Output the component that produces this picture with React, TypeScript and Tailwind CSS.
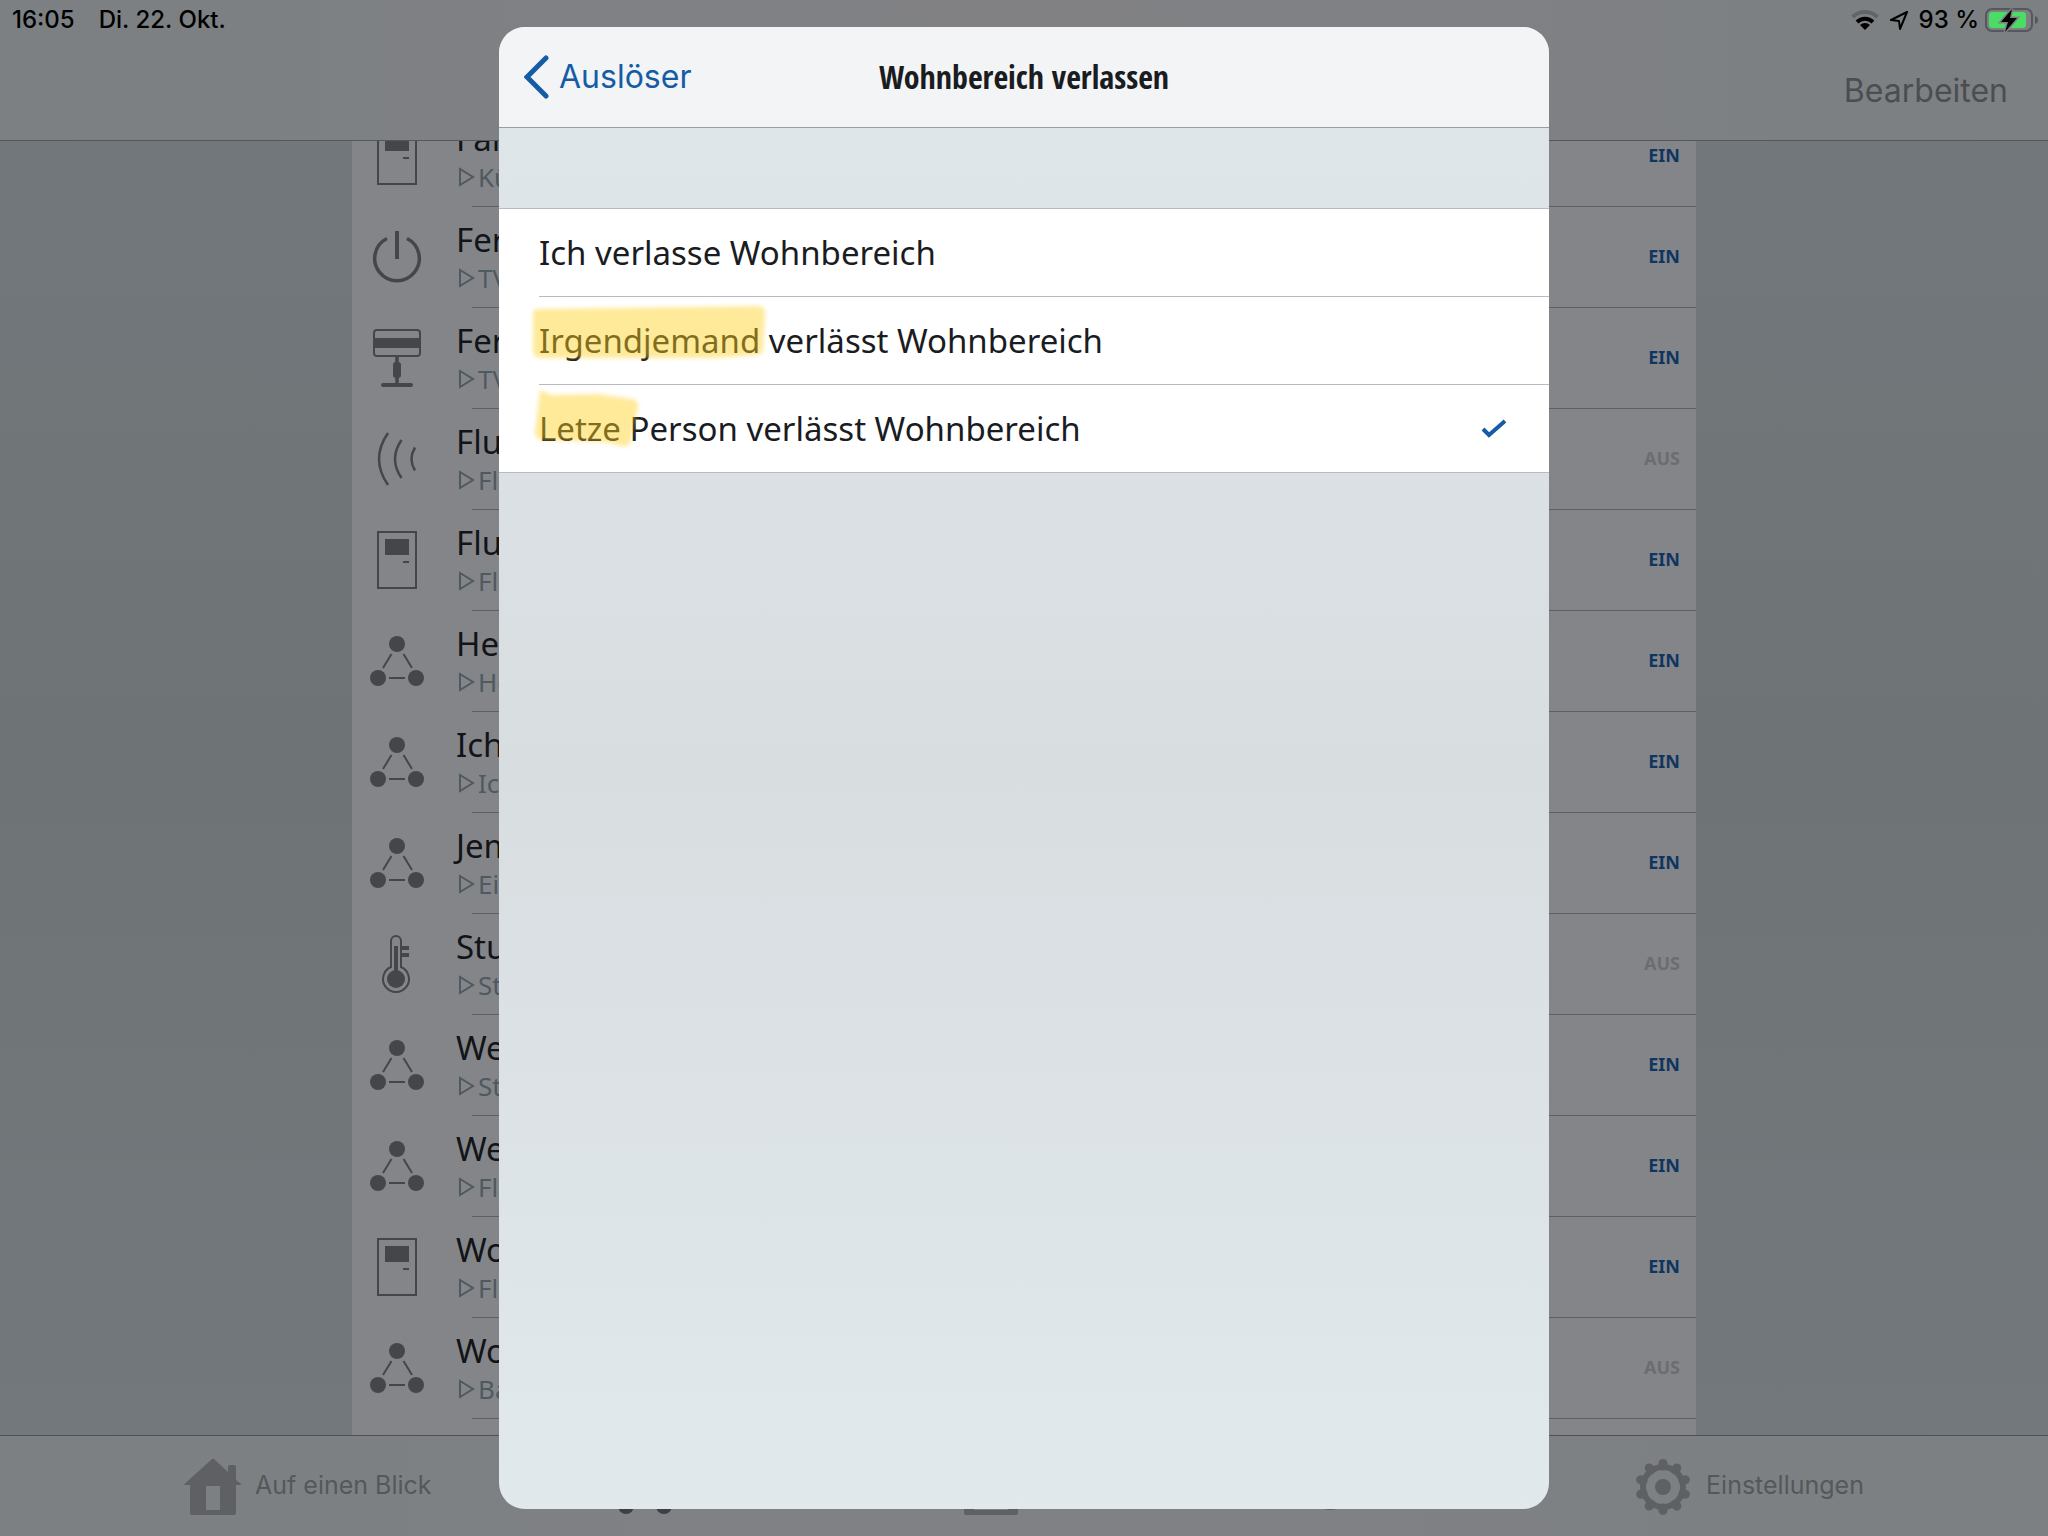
import type { ReactNode } from "react";

type IconName = "door" | "power" | "blind" | "motion" | "scene" | "thermometer";

const automations: { icon: IconName; title: string; trigger: string; on: boolean }[] = [
  { icon: "door", title: "Farbe", trigger: "Küche", on: true },
  { icon: "power", title: "Fernseher", trigger: "TV", on: true },
  { icon: "blind", title: "Fernseher", trigger: "TV", on: true },
  { icon: "motion", title: "Flur", trigger: "Flur", on: false },
  { icon: "door", title: "Flur", trigger: "Flur", on: true },
  { icon: "scene", title: "Heim", trigger: "Heim", on: true },
  { icon: "scene", title: "Ich", trigger: "Ich", on: true },
  { icon: "scene", title: "Jemand", trigger: "Ein", on: true },
  { icon: "thermometer", title: "Stufe", trigger: "Stufe", on: false },
  { icon: "scene", title: "Wenn", trigger: "Stufe", on: true },
  { icon: "scene", title: "Wenn", trigger: "Flur", on: true },
  { icon: "door", title: "Wohnen", trigger: "Flur", on: true },
  { icon: "scene", title: "Wohnen", trigger: "Bad", on: false },
];

const icons: Record<IconName, ReactNode> = {
  door: (
    <>
      <rect x="11" y="2" width="38" height="56" strokeWidth="2" />
      <path d="M18 9h24v16H18zM36 31h6v2h-6z" fill="currentColor" stroke="none" />
    </>
  ),
  power: (
    <>
      <path d="M20 11.5a22.3 22.3 0 1 0 20 0" strokeWidth="3.5" />
      <path d="M30 4v28" strokeWidth="4" />
    </>
  ),
  blind: (
    <>
      <rect x="7" y="2" width="46" height="26" rx="3" strokeWidth="2" />
      <path d="M7 10h46v10H7z" fill="currentColor" stroke="none" />
      <path d="M30 28v28" strokeWidth="3.5" />
      <rect x="26" y="34" width="8" height="16" rx="3" fill="currentColor" stroke="none" />
      <path d="M16 57h28" strokeWidth="4" strokeLinecap="round" />
    </>
  ),
  motion: (
    <g strokeWidth="2.5">
      <path d="M21 4q-18 26 0 52" />
      <path d="M34.500 11q-13 19 0 38" />
      <path d="M48 18.500q-7 11.500 0 23" />
    </g>
  ),
  scene: (
    <>
      <g fill="currentColor" stroke="none">
        <circle cx="30" cy="13" r="8" />
        <circle cx="11" cy="47" r="8" />
        <circle cx="49" cy="47" r="8" />
      </g>
      <path d="M24.500 23l-8.500 14M36.500 23l8.500 14M22 47h16" strokeWidth="2" />
    </>
  ),
  thermometer: (
    <>
      <path d="M24 33V7a5 5 0 0 1 10 0v26A13 13 0 1 1 24 33z" strokeWidth="2" />
      <path d="M27 12h4v28h-4zM35 12h7v4h-7zM35 19h7v4h-7z" fill="currentColor" stroke="none" />
      <circle cx="29" cy="45" r="9" fill="currentColor" stroke="none" />
    </>
  ),
};

const tabs: { label: string; active?: boolean; icon: ReactNode }[] = [
  {
    label: "Auf einen Blick",
    icon: (
      <path
        fillRule="evenodd"
        d="M27.500 2.500q1.500-1.500 3 0L44 15V10q0-2 2-2h4q2 0 2 2v13l5 4q1 1-1 1h-4v28q0 2-2 2H8q-2 0-2-2V28H1.500q-2 0-.5-1.500zM22 29v24h14V29z"
      />
    ),
  },
  {
    label: "Szenen",
    active: true,
    icon: (
      <>
        <circle cx="27" cy="15" r="8" />
        <circle cx="8" cy="49" r="8" />
        <circle cx="46" cy="49" r="8" />
        <path d="M21 25l-8 14M33 25l8 14M19 49h16" stroke="currentColor" strokeWidth="2" />
      </>
    ),
  },
  {
    label: "Räume",
    icon: <path fillRule="evenodd" d="M2 4h50q2 0 2 2v50q0 2-2 2H2q-2 0-2-2V6q0-2 2-2zM10 12v41h34V12z" />,
  },
  {
    label: "Status",
    icon: (
      <>
        <circle cx="27" cy="29" r="23" fill="none" stroke="currentColor" strokeWidth="2" />
        <circle cx="27" cy="29" r="8" />
      </>
    ),
  },
  {
    label: "Einstellungen",
    icon: (
      <>
        <circle cx="28" cy="30" r="20" fill="none" stroke="currentColor" strokeWidth="6" />
        <circle cx="28" cy="30" r="8" />
        {[0, 36, 72, 108, 144, 180, 216, 252, 288, 324].map((angle) => (
          <path
            key={angle}
            d="M28 9V6.500"
            stroke="currentColor"
            strokeWidth="9"
            strokeLinecap="round"
            transform={`rotate(${angle} 28 30)`}
          />
        ))}
      </>
    ),
  },
];

const options = [
  { marked: "", text: "Ich verlasse Wohnbereich", checked: false },
  {
    marked: "Irgendjemand",
    text: " verlässt Wohnbereich",
    checked: false,
    shape: "M10 9L230 6q8 0 8 6l-2 38q0 5-8 5l-40 3H14q-8 0-8-8V14q0-5 4-5z",
  },
  {
    marked: "Letze",
    text: " Person verlässt Wohnbereich",
    checked: true,
    shape: "M13 2l12 5 45-1 36 5q6 2 5 8l-8 36q-2 5-8 3L78 54l-62-2q-8-1-8-7z",
  },
];

function StatusBar() {
  return (
    <div className="flex h-10 items-center justify-between pl-3 pr-[10px] font-['Inter',sans-serif] text-2xl font-medium leading-10 text-black">
      <div className="flex gap-6">
        <span>16:05</span>
        <span>Di. 22. Okt.</span>
      </div>
      <div className="flex items-center gap-[6px]">
        <svg className="mr-1" width="28" height="22" viewBox="0 0 28 22" fill="none" strokeWidth="4">
          <path d="M1.500 8a18 18 0 0 1 25 0" stroke="#626568" />
          <path d="M6 13a11.500 11.500 0 0 1 16 0" stroke="#000" />
          <path d="M14 21l-5-5a7 7 0 0 1 10 0z" fill="#000" />
        </svg>
        <svg className="mr-1" width="20" height="20" viewBox="0 0 20 20" fill="none" stroke="#000" strokeWidth="2" strokeLinejoin="round">
          <path d="M18 2L2 10l8 1 1 8z" />
        </svg>
        <span>93 %</span>
        <svg width="53" height="26" viewBox="0 0 53 26">
          <rect x="1" y="2" width="46" height="22" rx="6" fill="none" stroke="#55585b" strokeWidth="2" />
          <rect x="4" y="5" width="37" height="16" rx="3" fill="#4cdb64" />
          <path d="M50 9q3 1 3 4t-3 4z" fill="#55585b" />
          <path d="M27 2L16 15h7l-3 10 12-14h-7z" fill="#000" stroke="#7c8083" strokeWidth="3" paintOrder="stroke" />
        </svg>
      </div>
    </div>
  );
}

function AutomationRow({ icon, title, trigger, on }: (typeof automations)[number]) {
  return (
    <li>
      <div className="flex h-[100px] items-center pl-[15px]">
        <svg className="mr-[29px] shrink-0 text-[#454649]" width="60" height="60" viewBox="0 0 60 60" fill="none" stroke="currentColor">
          {icons[icon]}
        </svg>
        <div className="flex-1 pt-[2px]">
          <div className="text-[33px] leading-10 text-[#121417]">{title}</div>
          <div className="flex items-center gap-[3px] pl-[2px] text-[26px] leading-9 text-[#4e5a60]">
            <svg width="17" height="20" viewBox="0 0 17 20" fill="none" stroke="currentColor" strokeWidth="2">
              <path d="M2 2v16l13-8z" />
            </svg>
            {trigger}
          </div>
        </div>
        <div className={on ? "pb-[3px] pr-4 text-lg font-bold text-[#0f3560]" : "pb-[3px] pr-4 text-lg font-bold text-[#6b6d71]"}>
          {on ? "EIN" : "AUS"}
        </div>
      </div>
      <hr className="ml-[120px] border-t border-[#5f6065]" />
    </li>
  );
}

function TriggerDialog() {
  return (
    <div className="absolute inset-0 flex justify-center py-[27px]">
      <section
        role="dialog"
        aria-labelledby="dialog-title"
        className="w-full max-w-[1050px] overflow-hidden rounded-[26px] bg-linear-to-b from-[#e0e7eb] via-[#d8dde0] to-[#e1e9ec]"
      >
        <header className="grid h-[101px] grid-cols-[1fr_auto_1fr] items-center border-b border-[#9a9ea3] bg-[#f2f4f6] px-[25px]">
          <button type="button" className="flex items-center gap-[10px] justify-self-start font-['Inter',sans-serif] text-[32px] leading-10 text-[#155ca5]">
            <svg width="25" height="44" viewBox="0 0 25 44" fill="none" stroke="currentColor" strokeWidth="5" strokeLinecap="round">
              <path d="M22 3L3 22l19 19" />
            </svg>
            Auslöser
          </button>
          <h1
            id="dialog-title"
            className="font-['Noto_Sans_Condensed','Open_Sans_Condensed','Roboto_Condensed',Roboto,sans-serif] text-[32px] font-bold leading-10 text-[#1a1c1f]"
          >
            Wohnbereich verlassen
          </h1>
        </header>
        <ul className="mt-20 border-y border-[#b7bbc0] bg-white pl-10">
          {options.map((option, index) => (
            <li key={option.text} className={index > 0 ? "border-t border-[#b7bbc0]" : ""}>
              <button
                type="button"
                aria-pressed={option.checked}
                className="flex h-[87px] w-full items-center justify-between pr-[42px] text-left text-[33px] text-[#1a1c1f]"
              >
                <span className="whitespace-pre">
                  {option.marked && (
                    <span className="relative">
                      {option.marked}
                      <svg className="absolute -left-3 -top-[18px] blur-[2px]" width="244" height="64" viewBox="0 0 244 64" fill="#ffd020" fillOpacity=".45">
                        <path d={option.shape} />
                      </svg>
                    </span>
                  )}
                  {option.text}
                </span>
                {option.checked && (
                  <svg width="26" height="20" viewBox="0 0 26 20" fill="none" stroke="#155ca5" strokeWidth="4">
                    <path d="M2 10l6 6L24 2" />
                  </svg>
                )}
              </button>
            </li>
          ))}
        </ul>
      </section>
    </div>
  );
}

export default function App() {
  return (
    <div className="relative flex h-screen flex-col overflow-hidden bg-linear-to-b from-[#72787b] via-[#6e7376] to-[#73797c] font-['Noto_Sans',sans-serif]">
      <header className="h-[141px] shrink-0 border-b border-[#54575b] bg-linear-to-r from-[#7c8083] via-[#818184] to-[#7c8083]">
        <StatusBar />
        <div className="flex h-[100px] items-center justify-end pr-10 pt-[2px]">
          <button type="button" className="font-['Inter',sans-serif] text-[32px] text-[#4b4d51]">
            Bearbeiten
          </button>
        </div>
      </header>

      <main className="min-h-0 flex-1">
        <div className="mx-auto h-full w-full max-w-[1344px] overflow-hidden bg-[#848589]">
          <ul className="-mt-[35px]">
            {automations.map((item, index) => (
              <AutomationRow key={index} {...item} />
            ))}
          </ul>
        </div>
      </main>

      <nav className="flex h-[101px] shrink-0 items-center justify-between border-t border-[#4d5256] bg-linear-to-r from-[#7c8083] via-[#808184] to-[#7c8083] px-[184px]">
        {tabs.map((tab) => (
          <a
            key={tab.label}
            href="#"
            className={
              tab.active
                ? "flex items-center gap-[14px] font-['Inter',sans-serif] text-[25px] text-[#3d4145]"
                : "flex items-center gap-[14px] font-['Inter',sans-serif] text-[25px] text-[#55575b]"
            }
          >
            <svg className={tab.active ? "text-[#3d4145]" : "text-[#5e6064]"} width="57" height="58" viewBox="0 0 57 58" fill="currentColor">
              {tab.icon}
            </svg>
            {tab.label}
          </a>
        ))}
      </nav>

      <TriggerDialog />
    </div>
  );
}
